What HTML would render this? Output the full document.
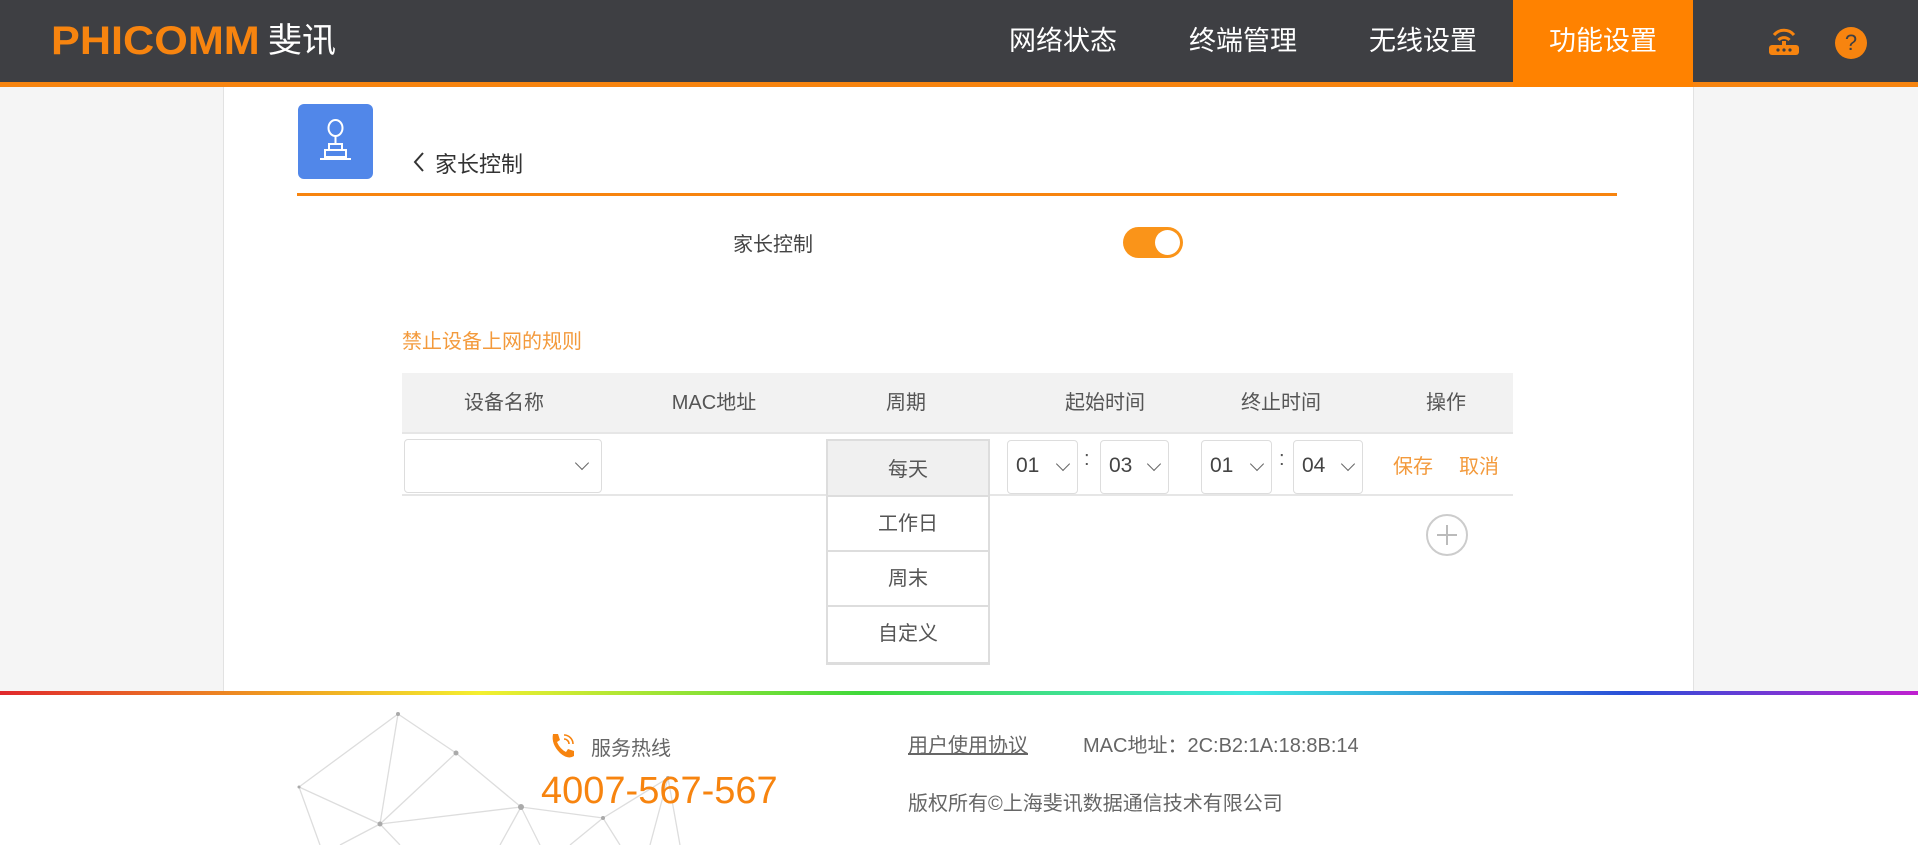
<!DOCTYPE html>
<html><head><meta charset="utf-8"><style>
*{margin:0;padding:0;box-sizing:border-box}
body{width:1918px;height:845px;overflow:hidden;background:#f5f5f5;font-family:"Liberation Sans","Noto Sans CJK SC",sans-serif;color:#555;position:relative}
.a{position:absolute}
.hdr{left:0;top:0;width:1918px;height:82px;background:#3e3f43}
.obar{left:0;top:82px;width:1918px;height:5px;background:#f7840f}
.nav{top:0;height:82px;line-height:82px;font-size:27px;color:#fff;text-align:center;width:180px}
.card{left:223px;top:87px;width:1471px;height:605px;background:#fff;border-left:1px solid #e2e2e2;border-right:1px solid #e2e2e2}
.t20{font-size:20px}
.th{top:373px;height:61px;line-height:61px;font-size:20px;color:#555;text-align:center;width:180px}
.sel{border:1px solid #ddd;border-radius:4px;background:#fff;height:54px}
.chev{position:absolute;top:18px;width:10px;height:10px;border-right:1.5px solid #666;border-bottom:1.5px solid #666;transform:rotate(45deg)}
.num{position:absolute;left:8px;top:0;line-height:50px;font-size:21px;color:#444}
.dd{left:826px;width:164px;height:55px;line-height:55px;text-align:center;font-size:20px;border:2px solid #ddd;border-top:none;background:#fff}
</style></head><body>
<div class="a hdr"></div>
<div class="a obar"></div>
<div class="a" style="left:51px;top:19px;font-size:40px;font-weight:bold;color:#f7840f;transform:scaleX(1.08);transform-origin:left;line-height:44px">PHICOMM</div>
<div class="a" style="left:268px;top:16px;font-size:34px;color:#fff;line-height:50px">斐讯</div>
<div class="a nav" style="left:973px">网络状态</div>
<div class="a nav" style="left:1153px">终端管理</div>
<div class="a nav" style="left:1333px">无线设置</div>
<div class="a" style="left:1513px;top:0;width:180px;height:87px;background:#ff8200"></div>
<div class="a nav" style="left:1513px">功能设置</div>
<svg class="a" style="left:1768px;top:26px" width="32" height="30" viewBox="0 0 32 30">
<path d="M6 9 A13 13 0 0 1 26 9" stroke="#f7840f" stroke-width="3" fill="none"/>
<path d="M10.5 14 A7.5 7.5 0 0 1 21.5 14" stroke="#f7840f" stroke-width="3" fill="none"/>
<rect x="14" y="15" width="4" height="5" fill="#f7840f"/>
<rect x="1" y="19" width="30" height="10" rx="3" fill="#f7840f"/>
<circle cx="10" cy="24" r="1.6" fill="#3e3f43"/><circle cx="16" cy="24" r="1.6" fill="#3e3f43"/><circle cx="22" cy="24" r="1.6" fill="#3e3f43"/>
</svg>
<div class="a" style="left:1835px;top:27px;width:32px;height:32px;border-radius:50%;background:#f7840f;color:#3e3f43;font-size:22px;text-align:center;line-height:32px">?</div>

<div class="a card"></div>
<div class="a" style="left:298px;top:104px;width:75px;height:75px;background:#5187e9;border-radius:6px"></div>
<svg class="a" style="left:298px;top:104px" width="75" height="75" viewBox="0 0 75 75">
<ellipse cx="37.5" cy="24" rx="7" ry="8" stroke="#fff" stroke-width="2" fill="none"/>
<line x1="37.5" y1="32" x2="37.5" y2="40" stroke="#fff" stroke-width="2"/>
<rect x="31" y="40" width="13" height="6" stroke="#fff" stroke-width="2" fill="none"/>
<rect x="27" y="46" width="21" height="7" stroke="#fff" stroke-width="2" fill="none"/>
<line x1="22" y1="55" x2="53" y2="55" stroke="#fff" stroke-width="2"/>
</svg>
<svg class="a" style="left:412px;top:151px" width="14" height="22" viewBox="0 0 14 22"><path d="M11 2 L3 11 L11 20" stroke="#333" stroke-width="2" fill="none"/></svg>
<div class="a" style="left:435px;top:147px;font-size:22px;color:#333">家长控制</div>
<div class="a" style="left:297px;top:193px;width:1320px;height:3px;background:#f7840f"></div>

<div class="a t20" style="left:733px;top:228px;color:#444">家长控制</div>
<div class="a" style="left:1123px;top:227px;width:60px;height:31px;border-radius:16px;background:#fa9419"></div>
<div class="a" style="left:1155px;top:230px;width:25px;height:25px;border-radius:50%;background:#fff"></div>

<div class="a t20" style="left:402px;top:325px;color:#f39a3c">禁止设备上网的规则</div>
<div class="a" style="left:402px;top:373px;width:1111px;height:61px;background:#f2f2f2;border-bottom:2px solid #e6e6e6"></div>
<div class="a th" style="left:414px">设备名称</div>
<div class="a th" style="left:624px">MAC地址</div>
<div class="a th" style="left:816px">周期</div>
<div class="a th" style="left:1015px">起始时间</div>
<div class="a th" style="left:1191px">终止时间</div>
<div class="a th" style="left:1356px">操作</div>
<div class="a" style="left:402px;top:494px;width:1111px;height:2px;background:#e6e6e6"></div>

<div class="a sel" style="left:404px;top:439px;width:198px"><span class="chev" style="left:172px"></span></div>
<div class="a sel" style="left:1007px;top:440px;width:71px"><span class="num">01</span><span class="chev" style="left:50px"></span></div>
<div class="a" style="left:1084px;top:448px;font-size:20px">:</div>
<div class="a sel" style="left:1100px;top:440px;width:69px"><span class="num">03</span><span class="chev" style="left:48px"></span></div>
<div class="a sel" style="left:1201px;top:440px;width:71px"><span class="num">01</span><span class="chev" style="left:50px"></span></div>
<div class="a" style="left:1279px;top:448px;font-size:20px">:</div>
<div class="a sel" style="left:1293px;top:440px;width:70px"><span class="num">04</span><span class="chev" style="left:49px"></span></div>
<div class="a t20" style="left:1393px;top:450px;color:#f39a3c">保存</div>
<div class="a t20" style="left:1459px;top:450px;color:#f39a3c">取消</div>
<div class="a" style="left:1426px;top:514px;width:42px;height:42px;border-radius:50%;border:2px solid #ccc"></div>
<div class="a" style="left:1437px;top:534px;width:20px;height:2px;background:#bbb"></div>
<div class="a" style="left:1446px;top:525px;width:2px;height:20px;background:#bbb"></div>

<div class="a dd" style="top:439px;height:58px;border-top:2px solid #ddd;background:#f0f0f0;line-height:58px">每天</div>
<div class="a dd" style="top:497px">工作日</div>
<div class="a dd" style="top:552px">周末</div>
<div class="a dd" style="top:607px;height:58px;border-bottom:3px solid #ddd">自定义</div>

<div class="a" style="left:0;top:691px;width:1918px;height:4px;background:linear-gradient(90deg,#e0282c,#f0a020 15%,#f4ef30 25%,#3fd83a 45%,#40e8e0 65%,#2a4ed8 85%,#c020d0)"></div>
<div class="a" style="left:0;top:695px;width:1918px;height:150px;background:#fff"></div>
<svg class="a" style="left:0;top:695px" width="800" height="150" viewBox="0 695 800 150">
<g stroke="#ddd" stroke-width="1.3" fill="none">
<path d="M398 714L299 787L380 824L398 714M398 714L456 753L521 807M380 824L456 753M380 824L521 807L603 818L668 778M299 787L320 845M380 824L340 845M380 824L400 845M521 807L500 845M521 807L540 845M603 818L570 845M603 818L620 845M668 778L650 845M668 778L680 845"/>
</g>
<g fill="#aaa"><circle cx="398" cy="714" r="2"/><circle cx="456" cy="753" r="2.5"/><circle cx="380" cy="824" r="2.5"/><circle cx="521" cy="807" r="3"/><circle cx="603" cy="818" r="2"/><circle cx="668" cy="778" r="2"/><circle cx="299" cy="787" r="1.5"/></g>
</svg>
<svg class="a" style="left:548px;top:731px" width="30" height="30" viewBox="0 0 30 30">
<path d="M5 3 L10 3 L12 9 L9 11 Q12 18 18 21 L20 18 L26 20 L26 25 Q20 29 12 22 Q3 13 5 3Z" fill="#f7840f"/>
<path d="M16 4 A9 9 0 0 1 25 13" stroke="#f7840f" stroke-width="1.6" fill="none"/>
<path d="M16 8 A5 5 0 0 1 21 13" stroke="#f7840f" stroke-width="1.6" fill="none"/>
</svg>
<div class="a t20" style="left:591px;top:732px;color:#666">服务热线</div>
<div class="a" style="left:541px;top:770px;font-size:38px;color:#f7840f">4007-567-567</div>
<div class="a t20" style="left:908px;top:729px;color:#666;text-decoration:underline">用户使用协议</div>
<div class="a t20" style="left:1083px;top:729px;color:#666">MAC地址：2C:B2:1A:18:8B:14</div>
<div class="a t20" style="left:908px;top:787px;color:#666">版权所有©上海斐讯数据通信技术有限公司</div>
</body></html>
